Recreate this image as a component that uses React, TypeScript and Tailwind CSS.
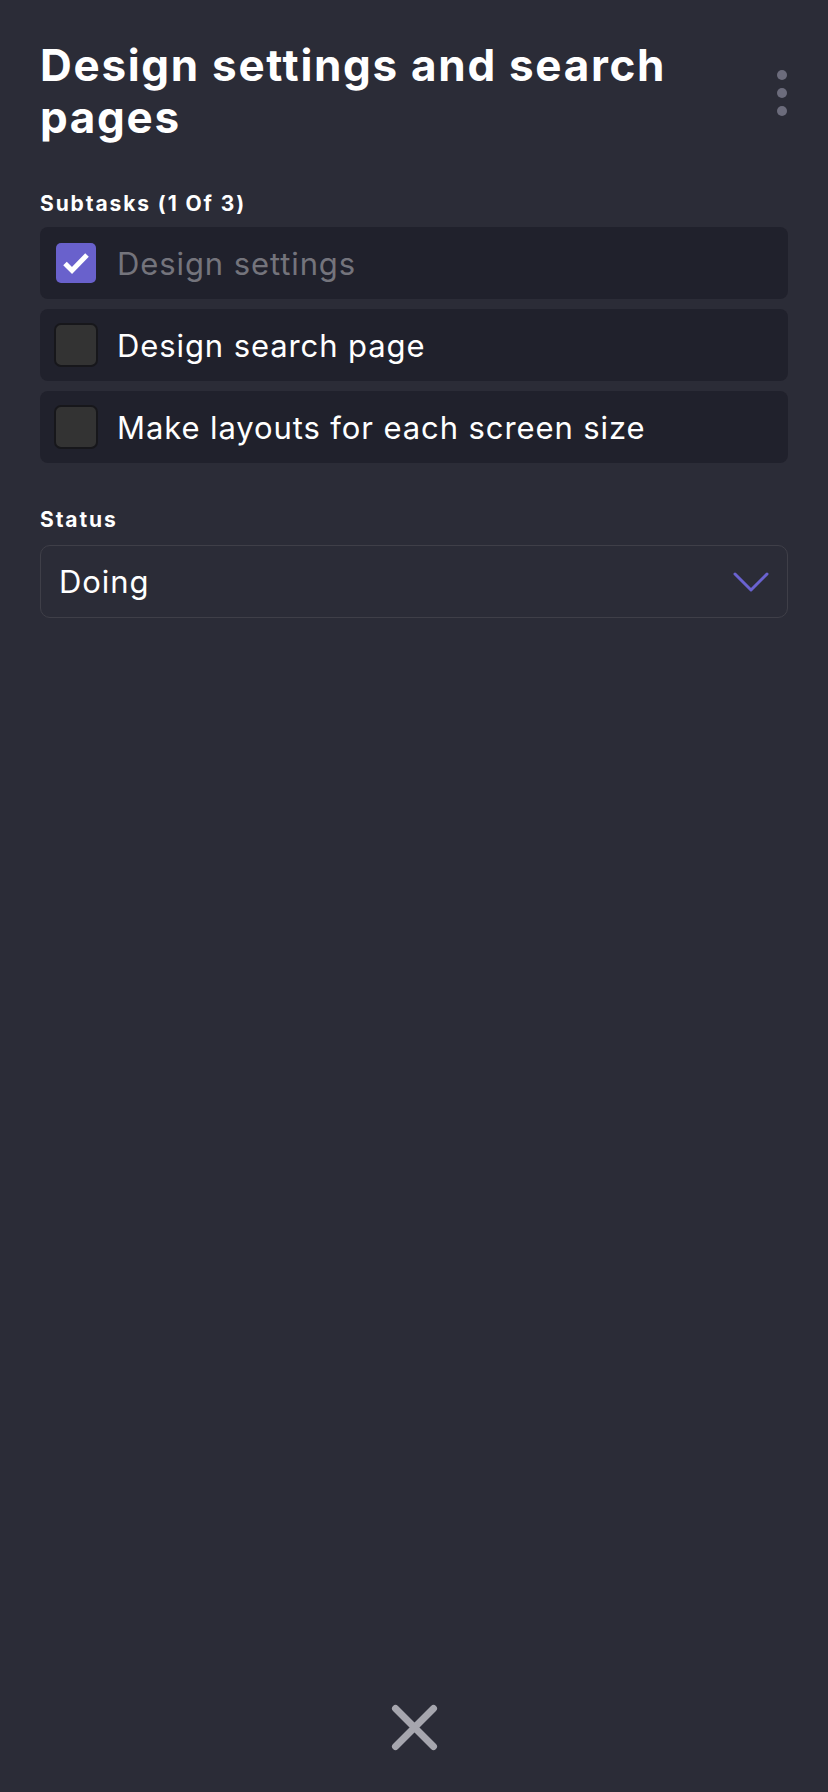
import { useState } from 'react'

const subtasksInit = [
  { title: 'Design settings', done: true },
  { title: 'Design search page', done: false },
  { title: 'Make layouts for each screen size', done: false },
]

const TaskDetail = () => {
  const [subtasks, setSubtasks] = useState(subtasksInit)
  const doneCount = subtasks.filter((s) => s.done).length

  const toggle = (i: number) => {
    setSubtasks(subtasks.map((s, idx) => (idx === i ? { ...s, done: !s.done } : s)))
  }

  return (
    <div className="min-h-screen bg-[#2b2c37] flex flex-col px-10 font-['Inter',sans-serif]">
      {/* Header */}
      <div className="flex items-start justify-between pt-[39px]">
        <h1 className="text-[44px] leading-[52px] font-bold text-white pr-14 tracking-[1.7px]">
          Design settings and search pages
        </h1>
        <button className="flex flex-col gap-2 mt-[31px] mr-[1px] shrink-0">
          <span className="w-[10px] h-[10px] rounded-full bg-[#6c6c7c]" />
          <span className="w-[10px] h-[10px] rounded-full bg-[#6c6c7c]" />
          <span className="w-[10px] h-[10px] rounded-full bg-[#6c6c7c]" />
        </button>
      </div>

      {/* Subtasks */}
      <h2 className="mt-[49px] text-[21px] leading-[24px] font-bold text-white tracking-[1.9px]">
        Subtasks ({doneCount} Of {subtasks.length})
      </h2>
      <div className="mt-[11px] flex flex-col gap-[10px]">
        {subtasks.map((s, i) => (
          <label
            key={s.title}
            onClick={() => toggle(i)}
            className="h-[72px] rounded-[8px] bg-[#20212c] flex items-center pl-[14px] cursor-pointer"
          >
            <span className="w-[44px] h-[44px] flex items-center justify-center shrink-0">
              {s.done ? (
                <span className="w-[40px] h-[40px] rounded-[5px] bg-[#6961cc] flex items-center justify-center">
                  <svg width="40" height="40" viewBox="0 0 40 40" fill="none">
                    <path d="M9 20.5l7 7L31 12" stroke="#fff" strokeWidth="5" strokeLinejoin="miter" />
                  </svg>
                </span>
              ) : (
                <span className="w-[44px] h-[44px] rounded-[7px] bg-[#333333] border-2 border-[#17171b]" />
              )}
            </span>
            <span
              className={`ml-[19px] text-[31px] leading-none font-normal tracking-[0.9px] ${s.done ? 'text-[#74747c]' : 'text-white'}`}
            >
              {s.title}
            </span>
          </label>
        ))}
      </div>

      {/* Status */}
      <h2 className="mt-[45px] text-[21px] leading-[24px] font-bold text-white tracking-[1.9px]">Status</h2>
      <div className="mt-[13px] h-[73px] rounded-[10px] border border-[#3f3f48] flex items-center justify-between pl-[18px] pr-[18px]">
        <span className="text-[31px] text-white leading-none tracking-[0.9px]">Doing</span>
        <svg width="36" height="20" viewBox="0 0 36 20" fill="none">
          <path d="M2 2l16 16L34 2" stroke="#6a62d0" strokeWidth="3" strokeLinecap="round" strokeLinejoin="round" />
        </svg>
      </div>

      <div className="flex-1" />

      {/* Close */}
      <div className="flex justify-center pb-[41px]">
        <button>
          <svg width="47" height="47" viewBox="0 0 47 47" fill="none">
            <path d="M4.5 4.5l38 38M42.5 4.5l-38 38" stroke="#a6a6ae" strokeWidth="7" strokeLinecap="round" />
          </svg>
        </button>
      </div>
    </div>
  )
}

export default TaskDetail
